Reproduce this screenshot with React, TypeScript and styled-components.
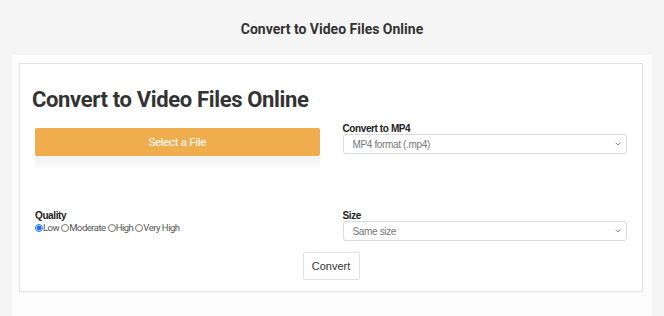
import React from 'react';
import styled, { createGlobalStyle } from 'styled-components';

const GlobalStyle = createGlobalStyle`
  html, body {
    margin: 0;
    padding: 0;
    background: #f5f5f5;
    font-family: Roboto, "Liberation Sans", Arial, sans-serif;
    color: #333;
  }
`;

const Header = styled.header`
  height: 55px;
  display: flex;
  align-items: center;
  justify-content: center;
  font-size: 14px;
  font-weight: 700;
  color: #333;
  padding-top: 3px;
  box-sizing: border-box;
`;

const Card = styled.main`
  margin: 0 12px;
  background: #fdfdfd;
  padding: 8px 9px 24px 7px;
  min-height: 261px;
  box-sizing: border-box;
`;

const Panel = styled.section`
  background: #fff;
  border: 1px solid #e3e3e3;
  box-shadow: 0 1px 2px rgba(0, 0, 0, 0.04);
  padding: 23px 15px 11px 15px;
`;

const Title = styled.h1`
  margin: 0 0 11px -3px;
  font-size: 22px;
  line-height: 26px;
  font-weight: 700;
  letter-spacing: -0.35px;
  color: #333;
`;

const Grid = styled.div`
  display: grid;
  grid-template-columns: 1fr 1fr;
  column-gap: 23px;
  row-gap: 43px;
  align-items: start;
`;

const Field = styled.div`
  display: flex;
  flex-direction: column;
`;

const Label = styled.label`
  display: block;
  font-family: "Liberation Sans", Arial, sans-serif;
  font-size: 10px;
  line-height: 10px;
  font-weight: 700;
  letter-spacing: -0.4px;
  color: #222;
`;

const FileButton = styled.button`
  margin-top: 4px;
  height: 28px;
  border: none;
  border-radius: 2px;
  background: #f0ad4e;
  color: #fff;
  font-family: Roboto, sans-serif;
  font-size: 11.5px;
  letter-spacing: -0.3px;
  cursor: pointer;
`;

const DropShade = styled.div`
  height: 12px;
  background: linear-gradient(#f2f2f2, #fbfbfb);
`;

const SelectWrap = styled.div`
  position: relative;
  height: 20px;

  svg {
    position: absolute;
    right: 6px;
    top: 8px;
    pointer-events: none;
  }
`;

const Select = styled.select`
  display: block;
  width: 100%;
  height: 20px;
  border: 1px solid #dcdcdc;
  border-radius: 3px;
  background: #fff;
  color: #777;
  font-family: "Liberation Sans", Arial, sans-serif;
  font-size: 10px;
  letter-spacing: -0.35px;
  padding: 0 0 0 9px;
  appearance: none;
  outline: none;
`;

const RadioRow = styled.div`
  display: flex;
  align-items: center;
  height: 13px;
  font-family: Roboto, sans-serif;
  font-size: 9.5px;
  letter-spacing: -0.5px;
  color: #555;
`;

const RadioOption = styled.label`
  display: flex;
  align-items: center;
  margin-right: 2px;

  input {
    width: 8px;
    height: 8px;
    margin: 0;
    accent-color: #1a73e8;
  }
`;

const Actions = styled.div`
  display: flex;
  justify-content: center;
  margin-top: 11px;
`;

const ConvertButton = styled.button`
  height: 28px;
  width: 57px;
  padding: 0;
  border: 1px solid #e2e2e2;
  border-radius: 2px;
  background: #fff;
  color: #333;
  font-family: "Liberation Sans", Arial, sans-serif;
  font-size: 11px;
  cursor: pointer;
`;

const Chevron = () => (
  <svg width="6" height="4" viewBox="0 0 6 4" fill="none">
    <path d="M0.7 0.7 L3 3 L5.3 0.7" stroke="#888" strokeWidth="1" />
  </svg>
);

const Dropdown: React.FC<{ value: string; label: string }> = ({ value, label }) => (
  <SelectWrap>
    <Select defaultValue={value}>
      <option value={value}>{label}</option>
    </Select>
    <Chevron />
  </SelectWrap>
);

const qualities = ['Low', 'Moderate', 'High', 'Very High'];

export default function App() {
  return (
    <>
      <GlobalStyle />
      <Header>Convert to Video Files Online</Header>
      <Card>
        <Panel>
          <Title>Convert to Video Files Online</Title>
          <Grid>
            <Field>
              <FileButton>Select a File</FileButton>
              <DropShade />
            </Field>
            <Field>
              <Label>Convert to MP4</Label>
              <Dropdown value="mp4" label="MP4 format (.mp4)" />
            </Field>
            <Field>
              <Label>Quality</Label>
              <RadioRow>
                {qualities.map((q, i) => (
                  <RadioOption key={q}>
                    <input type="radio" name="quality" defaultChecked={i === 0} />
                    {q}
                  </RadioOption>
                ))}
              </RadioRow>
            </Field>
            <Field>
              <Label>Size</Label>
              <Dropdown value="same" label="Same size" />
            </Field>
          </Grid>
          <Actions>
            <ConvertButton>Convert</ConvertButton>
          </Actions>
        </Panel>
      </Card>
    </>
  );
}
